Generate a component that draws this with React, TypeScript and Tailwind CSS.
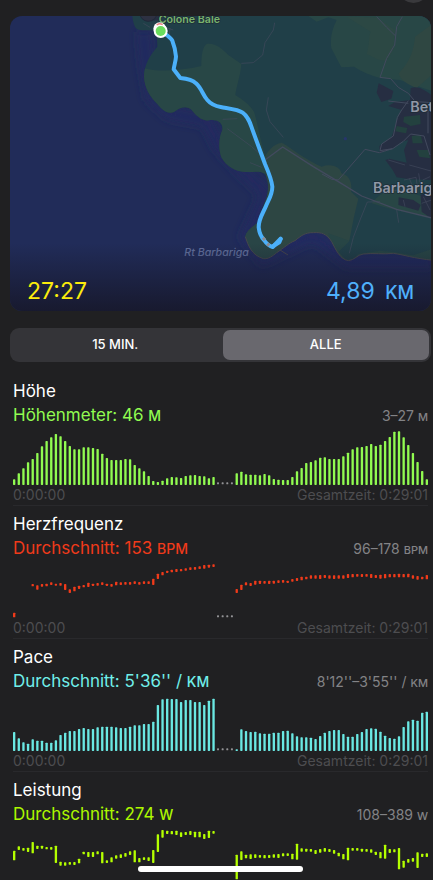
import React, { useState } from 'react'
import { X } from 'lucide-react'

type Sample = [number, number] | null

// Charts use a 1245 x 165 grid with 90 slots; y grows downwards.
const CHART_W = 1245
const CHART_H = 165
const SLOTS = 90
const PAUSE = [44, 45, 46, 47]

const gap = (n: number): Sample[] => Array(n).fill(null)
const bars = (values: number[]): Sample[] => values.map((v) => [CHART_H - v, CHART_H])

const elevation: Sample[] = [
  ...bars([
    17, 35, 50, 68, 78, 96, 116, 132, 143, 153, 146, 132, 117, 107, 107, 113, 113, 111, 108, 94, 81, 75,
    75, 75, 78, 77, 60, 50, 41, 27, 12, 9, 13, 20, 24, 23, 21, 27, 29, 30, 27, 26, 20, 24,
  ]),
  ...gap(4),
  ...bars([
    35, 40, 32, 31, 31, 29, 33, 29, 18, 16, 15, 15, 24, 41, 51, 66, 69, 74, 82, 83, 78, 78, 78, 86, 97,
    107, 113, 114, 117, 123, 117, 121, 132, 144, 160, 161, 143, 120, 96, 69, 42, 17,
  ]),
]

const heartRate: Sample[] = [
  [149, 163], ...gap(3),
  [63, 70], [67, 80], [63, 71], [62, 70], [58, 66], [62, 68], [60, 68], [63, 81], [79, 90], [71, 85],
  [68, 78], [66, 73], [59, 72], [62, 69], [60, 68], [58, 66], [62, 69], [63, 71], [56, 67], [58, 66],
  [57, 65], [57, 65], [55, 63], [57, 65], [55, 63], [55, 63], [47, 66], [32, 48], [27, 37], [23, 30],
  [20, 28], [18, 27], [18, 25], [16, 23], [13, 21], [12, 20], [10, 18], [6, 17], [5, 14], [4, 12],
  ...gap(4),
  [78, 90], [65, 81], [58, 67], [60, 69], [53, 65], [53, 63], [54, 62], [53, 63], [53, 62], [52, 60],
  [51, 59], [53, 60], [48, 56], [45, 54], [41, 52], [41, 49], [37, 47], [37, 47], [36, 48], [36, 45],
  [37, 47], [37, 48], [37, 47], [37, 47], [33, 45], [33, 43], [33, 41], [33, 42], [33, 41], [33, 45],
  [36, 45], [35, 47], [33, 46], [33, 43], [33, 43], [32, 43], [33, 43], [32, 43], [37, 47], [39, 50],
  [41, 49], [36, 49],
]

const pace: Sample[] = [
  ...bars([
    57, 38, 26, 22, 35, 31, 31, 25, 25, 32, 48, 55, 60, 60, 66, 69, 66, 66, 71, 73, 73, 73, 71, 69, 69,
    73, 77, 77, 81, 81, 88, 138, 155, 157, 156, 156, 147, 153, 153, 147, 147, 138, 151, 157,
  ]),
  ...gap(4),
  ...bars([
    5, 65, 60, 57, 58, 53, 52, 52, 55, 55, 60, 61, 53, 44, 41, 41, 40, 36, 45, 55, 60, 63, 63, 51, 43,
    43, 51, 57, 66, 68, 67, 58, 46, 39, 37, 44, 72, 89, 94, 91, 115, 118,
  ]),
]

const power: Sample[] = [
  [65, 94], [52, 63], [57, 65], [56, 69], [39, 73], [50, 60], [50, 59], [54, 61], [54, 62], [50, 102],
  [98, 110], [100, 110], [99, 107], [99, 108], [89, 103], [68, 76], [69, 84], [69, 84], [67, 76],
  [69, 103], [94, 102], [85, 100], [79, 89], [76, 87], [72, 83], [67, 78], [64, 100], [87, 100],
  [85, 93], [85, 96], [63, 102], [16, 69], [3, 26], [5, 15], [6, 16], [5, 18], [10, 24], [9, 18],
  [6, 18], [8, 25], [8, 25], [15, 30], [5, 27], [6, 14],
  ...gap(4),
  [77, 151], [67, 93], [77, 88], [76, 90], [76, 87], [78, 86], [78, 88], [78, 87], [76, 86], [75, 87],
  [73, 82], [73, 81], [74, 91], [44, 92], [58, 68], [59, 68], [60, 68], [63, 75], [60, 71], [57, 68],
  [60, 69], [63, 74], [71, 82], [75, 91], [56, 94], [57, 65], [57, 65], [59, 68], [60, 68], [61, 71],
  [68, 78], [69, 88], [47, 89], [60, 72], [61, 70], [57, 121], [95, 116], [90, 101], [87, 98],
  [70, 117], [74, 84], [73, 84],
]

const metrics = [
  { title: 'Höhe', label: 'Höhenmeter: 46', unit: 'M', range: '3–27', rangeUnit: 'M', text: 'text-[#91fb51]', fill: 'fill-[#91fb51]', data: elevation },
  { title: 'Herzfrequenz', label: 'Durchschnitt: 153', unit: 'BPM', range: '96–178', rangeUnit: 'BPM', text: 'text-[#f03a1a]', fill: 'fill-[#f03a1a]', data: heartRate },
  { title: 'Pace', label: "Durchschnitt: 5'36'' /", unit: 'KM', range: "8'12''–3'55'' /", rangeUnit: 'KM', text: 'text-[#70efea]', fill: 'fill-[#6ae8e3]', data: pace },
  { title: 'Leistung', label: 'Durchschnitt: 274', unit: 'W', range: '108–389', rangeUnit: 'W', text: 'text-[#acf700]', fill: 'fill-[#b4ff00]', data: power },
]

function Chart({ data, fill }: { data: Sample[]; fill: string }) {
  const step = (CHART_W - 7) / (SLOTS - 1)
  return (
    <svg viewBox={`0 0 ${CHART_W} ${CHART_H}`} className="block w-full" aria-hidden="true">
      {data.map((s, i) =>
        s ? <rect key={i} x={i * step} y={s[0]} width={7} height={s[1] - s[0]} rx={2} className={fill} /> : null
      )}
      {PAUSE.map((i) => (
        <rect key={i} x={i * step} y={CHART_H - 8} width={6} height={6} rx={2} className="fill-[#929295]" />
      ))}
    </svg>
  )
}

function RouteMap() {
  return (
    <svg
      viewBox="30 48 1263 885"
      preserveAspectRatio="xMidYMid slice"
      className="absolute inset-0 h-full w-full font-['Inter',sans-serif]"
      role="img"
      aria-label="Route"
    >
      <defs>
        <linearGradient id="fade" x1="0" y1="0" x2="0" y2="1">
          <stop offset="0" stopColor="#17182b" stopOpacity="0" />
          <stop offset="1" stopColor="#17182b" stopOpacity="0.95" />
        </linearGradient>
        <filter id="shore" x="-10%" y="-10%" width="120%" height="120%">
          <feGaussianBlur stdDeviation="14" />
        </filter>
        <clipPath id="land">
          <path d="M396 40 C398 62 402 82 412 88 C430 95 460 88 470 95 L472 140 C450 165 432 195 432 230 C434 265 450 290 472 312 C490 335 505 342 522 336 C540 322 560 315 575 330 C590 350 610 366 632 360 C655 358 670 370 667 390 C655 415 656 450 664 472 C680 500 705 514 735 516 C765 518 790 508 798 530 C806 550 806 570 800 590 L782 640 L772 670 C755 680 738 695 736 710 C745 738 755 765 790 776 C805 778 818 768 830 758 C850 745 868 728 885 722 C902 708 915 697 940 698 C965 696 980 702 995 725 C1008 750 1020 778 1045 782 C1065 780 1070 765 1090 762 C1120 758 1150 764 1180 760 C1210 764 1240 775 1300 781 L1300 40 Z" />
        </clipPath>
      </defs>
      <rect x="0" y="0" width="1340" height="960" fill="#212c59" />
      <path
        d="M430 95 L440 200 L455 290 L510 340 L620 362 L660 440 L730 516 L800 580 L740 710 L790 776 L940 705 L1045 785 L1300 785"
        fill="none" stroke="#252a63" strokeWidth="36" strokeOpacity="0.7" filter="url(#shore)"
      />
      <g clipPath="url(#land)">
        <rect x="380" y="40" width="940" height="760" fill="#203f48" />
        <path d="M425 203 C480 218 540 212 604 198 C604 165 608 140 620 132 C645 128 665 145 685 165 L724 192 C722 225 710 255 706 285 C730 300 750 315 762 335 C775 375 780 420 796 470 L800 520 L640 540 L420 350 Z" fill="#284746" />
        <path d="M925 48 L950 65 L985 52 L1010 60 C995 90 990 115 994 145 C1005 165 1015 185 1024 202 L1062 200 C1085 215 1110 225 1140 234 L1200 240 L1300 275 L1300 40 Z" fill="#284746" />
        <path d="M1040 50 L1130 52 L1185 90 L1180 150 L1160 182 C1135 185 1120 170 1100 162 C1110 130 1105 110 1112 95 Z" fill="#2c4844" />
        <path d="M1245 110 L1300 70 L1300 220 L1250 264 C1225 255 1200 240 1196 220 C1215 200 1240 170 1245 110 Z" fill="#2f4742" />
        <path d="M790 480 C800 455 820 432 845 428 C870 440 900 470 965 500 C990 490 1020 498 1024 520 C1045 525 1058 545 1053 575 L1075 596 L1062 650 L1048 722 L1015 755 L960 800 L720 800 L730 690 L775 660 L800 590 L800 540 Z" fill="#2d4643" />
        <path d="M736 700 L775 668 L790 720 L840 760 L790 790 L740 770 Z" fill="#294546" />
        <path d="M1048 722 L1016 755 L1048 790 L1075 762 L1140 752 L1180 756 L1240 766 L1300 745 L1300 800 L1010 800 L985 700 Z" fill="#274545" />
        <path d="M1115 610 C1145 570 1190 560 1225 575 L1270 590 L1285 650 C1225 640 1160 625 1115 610 Z" fill="#284645" />

        {/* built-up areas */}
        <g fill="#262e42">
          <path d="M1136 250 L1180 273 L1174 296 L1144 306 L1130 278 Z" />
          <path d="M1232 265 C1250 256 1270 266 1300 290 L1300 540 L1230 538 L1190 532 L1178 510 L1156 480 L1168 476 L1220 488 L1212 450 L1225 420 L1205 425 L1180 445 L1140 458 L1138 438 L1175 410 L1195 350 L1205 330 L1165 318 L1185 306 L1230 300 Z" />
          <path d="M1196 592 L1240 600 L1262 615 L1255 632 L1195 615 Z" />
          <path d="M1262 585 L1300 570 L1300 660 L1265 635 Z" />
          <path d="M420 40 L440 64 L478 60 L480 40 Z" />
        </g>
        <g fill="#23413f">
          <path d="M1190 378 L1222 384 L1218 400 L1186 394 Z" />
          <path d="M1212 350 L1260 345 L1262 372 L1232 378 L1210 366 Z" />
          <path d="M1235 408 L1262 404 L1268 430 L1238 430 Z" />
          <path d="M1250 450 L1285 450 L1290 475 L1258 470 Z" />
        </g>

        <g fill="none" stroke="#424a5e" strokeWidth="3" strokeLinejoin="round">
          <path d="M1130 50 L1160 82 L1187 108 L1184 135 L1160 175 L1140 232 L1172 236 L1195 262 L1225 280 L1246 305 M1187 108 L1190 80 L1207 50" />
          <path d="M1225 302 L1205 330 L1192 352 L1180 408 L1145 432 L1140 452 L1178 446 L1210 424 L1232 402 L1272 408 L1290 465" />
          <path d="M1246 305 L1300 308 M1284 330 L1284 400 M1165 303 L1225 310" />
          <path d="M798 478 L848 441 L940 500 L1015 545 L1085 588 L1190 628 L1300 655" strokeWidth="4" />
          <path d="M966 522 L995 538 L1015 540 L1095 448 L1138 458 L1178 446" />
          <path d="M824 68 L820 90 L795 128 L788 165 L760 188 L724 190" strokeWidth="2" />
          <path d="M805 292 L799 330 L810 365 L850 412" strokeWidth="2" />
          <path d="M668 358 L712 356 M682 386 L755 440 L800 480 M750 488 L785 502" strokeWidth="2" />
          <path d="M1140 605 L1102 606 L1080 660 L1060 712 L1048 760" strokeWidth="2" />
          <path d="M1165 480 L1215 495 M1228 495 L1300 515 M1190 630 L1196 668 M1150 580 L1170 572 L1210 570" strokeWidth="2" />
          <path d="M1212 540 L1248 532 L1252 560 M1228 535 L1240 565 M1256 520 L1262 560 M1268 540 L1290 530 M1270 590 L1290 630 M1265 610 L1295 600 M1210 600 L1215 620" strokeWidth="2" />
          <path d="M490 80 L520 90 M500 84 L496 100 M510 84 L508 104 M430 70 L450 82" strokeWidth="2" />
        </g>
      </g>
      <path
        d="M736 710 C745 738 755 765 790 776 C805 778 818 768 830 758 C850 745 868 728 885 722 C902 708 915 697 940 698 C965 696 980 702 995 725 C1008 750 1020 778 1045 782 C1065 780 1070 765 1090 762 C1120 758 1150 764 1180 760 C1210 764 1240 775 1300 781 M840 750 L864 765"
        fill="none" stroke="#46464d" strokeWidth="3"
      />
      <circle cx="1036" cy="416" r="5" fill="#26366b" />
      <circle cx="445" cy="38" r="26" fill="#2d3142" stroke="#20293a" strokeWidth="3" />

      <g stroke="#1d2b35" strokeWidth="4" strokeLinejoin="round" paintOrder="stroke">
        <text x="476" y="68" fontSize="32" fontWeight="600" fill="#79b36e">Colone Bale</text>
        <text x="1231" y="336" fontSize="43" fontWeight="600" fill="#9198a6">Betiga</text>
        <text x="1119" y="578" fontSize="43" fontWeight="600" fill="#9198a6">Barbariga</text>
      </g>
      <text x="553" y="768" fontSize="32" fontWeight="500" fontStyle="italic" fill="#62709d">Rt Barbariga</text>

      <rect x="0" y="730" width="1340" height="210" fill="url(#fade)" />

      <g fill="none" stroke="#4bb0fa" strokeWidth="12" strokeLinecap="round" strokeLinejoin="round">
        <path d="M482 92 C500 105 512 112 517 122 C524 140 527 155 528 170 C527 185 522 198 521 208 L541 234 C560 236 578 240 588 250 C605 265 608 285 622 300 C632 312 645 318 662 321 C690 326 715 328 728 338 C745 350 750 368 757 388 L795 492 C805 515 815 540 817 560 C817 585 805 600 798 618 C790 638 776 655 776 682 C778 700 784 712 792 720 C800 732 808 738 818 741 L842 716" />
        <path d="M820 738 L838 727 L842 717" />
      </g>
      <path d="M789 713 L795 720 M802 731 L808 737" stroke="#8a8b93" strokeWidth="9" />
      <circle cx="479" cy="86" r="19" fill="#fff" />
      <circle cx="482" cy="93" r="21" fill="#fff" />
      <path d="M470 75 Q479 68 488 74" fill="none" stroke="#e98484" strokeWidth="4" />
      <circle cx="482" cy="93" r="15" fill="#69dc5d" />
    </svg>
  )
}

export default function App() {
  const [range, setRange] = useState('ALLE')

  return (
    <div className="relative h-screen overflow-hidden bg-[#202022] font-['Inter',sans-serif] text-white">
      <main className="h-full overflow-y-auto pt-4 [scrollbar-width:none]">
        <button
          type="button"
          aria-label="Schließen"
          className="absolute right-1 -top-7 flex h-[31px] w-[31px] items-center justify-center rounded-full bg-[#39393c]"
        >
          <X className="h-4 w-4 text-[#9a9a9e]" />
        </button>

        <section className="relative ml-[10px] mr-[2px] flex aspect-[421/295] items-end overflow-hidden rounded-xl">
          <RouteMap />
          <div className="relative flex w-full items-baseline justify-between px-[17px] text-[23px] leading-9">
            <span className="text-[#fbec0c]">27:27</span>
            <span className="text-[#4fb0fb]">
              4,89 <span className="ml-1 text-[18px] font-medium">KM</span>
            </span>
          </div>
        </section>

        <div className="ml-[10px] mr-[2px] mt-[17px] flex h-[34px] gap-1 rounded-[9px] bg-[#343438] p-[2px]">
          {['15 MIN.', 'ALLE'].map((option) => (
            <button
              key={option}
              type="button"
              aria-pressed={range === option}
              onClick={() => setRange(option)}
              className={`flex-1 rounded-[7px] text-[13px] font-medium ${range === option ? 'bg-[#69686e]' : ''}`}
            >
              {option}
            </button>
          ))}
        </div>

        <div className="ml-[13px] mr-[5px] mt-[17px]">
          {metrics.map((m) => (
            <section key={m.title} className="mb-[6px] border-b border-[#29292c]">
              <h2 className="text-[17px] leading-6">{m.title}</h2>
              <div className="flex items-baseline justify-between leading-6">
                <p className={`text-[17px] ${m.text}`}>
                  {m.label} <span className="text-[14px] font-medium">{m.unit}</span>
                </p>
                <p className="text-[14px] text-[#838386]">
                  {m.range} <span className="text-[11px] font-medium">{m.rangeUnit}</span>
                </p>
              </div>
              <div className="mt-[1px]">
                <Chart data={m.data} fill={m.fill} />
              </div>
              <div className="flex justify-between text-[14px] leading-5 text-[#4d4d50]">
                <span>0:00:00</span>
                <span>Gesamtzeit: 0:29:01</span>
              </div>
            </section>
          ))}
        </div>
      </main>

      <div className="absolute bottom-2 left-2 right-0 mx-auto h-[6px] w-[38%] rounded-full bg-white" />
    </div>
  )
}
